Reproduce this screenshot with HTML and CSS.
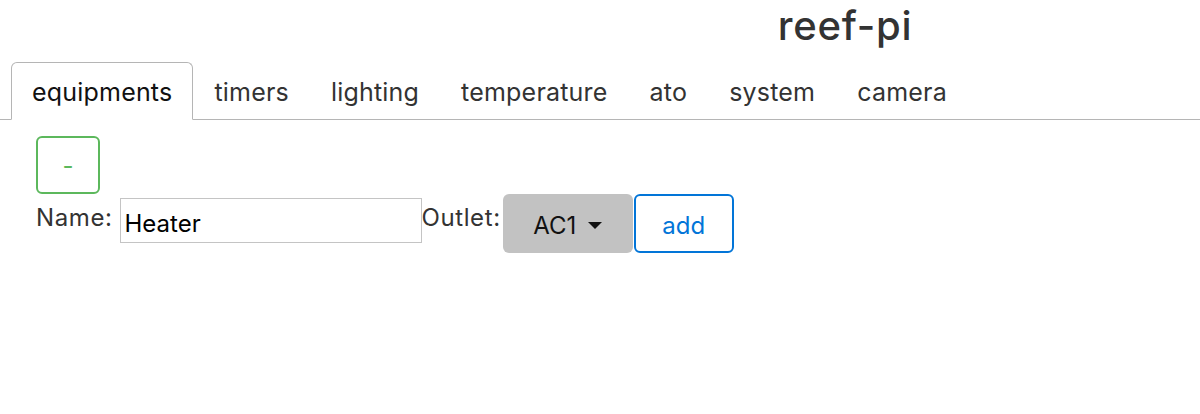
FILE: index.html
```html
<!DOCTYPE html>
<html>
<head>
<meta charset="utf-8">
<link rel="stylesheet" href="styles.css">
</head>
<body>
<header class="header"><h1 class="title">reef-pi</h1></header>
<ul class="tabs">
  <li class="tab active">equipments</li>
  <li class="tab">timers</li>
  <li class="tab">lighting</li>
  <li class="tab">temperature</li>
  <li class="tab">ato</li>
  <li class="tab">system</li>
  <li class="tab">camera</li>
</ul>
<main class="content">
  <button class="btn-minus">-</button>
  <div class="form-row">
    <label class="lbl">Name:</label>
    <input class="name-input" type="text" value="Heater">
    <label class="lbl">Outlet:</label>
    <button class="dropdown">AC1 <span class="caret"></span></button>
    <button class="btn-add">add</button>
  </div>
</main>
</body>
</html>
```
FILE: styles.css
```css
* { box-sizing: border-box; }
body {
  margin: 0;
  font-family: Inter, "Liberation Sans", sans-serif;
  color: #292b2c;
  background: #fff;
}
.header {
  height: 62px;
  padding-left: 490px;
  display: flex;
  justify-content: center;
}
.title {
  margin: 0;
  padding-top: 3px;
  font-size: 40px;
  font-weight: 500;
  letter-spacing: 0.8px;
  line-height: 46px;
  color: #333;
}
.tabs {
  list-style: none;
  margin: 0;
  padding: 0 0 0 11px;
  display: flex;
  border-bottom: 1px solid #b5b5b5;
  height: 58px;
}
.tab {
  padding: 0 20px;
  height: 58px;
  line-height: 58px;
  font-size: 25px;
  letter-spacing: 0.2px;
  color: #333;
  border: 1px solid transparent;
  border-radius: 6px 6px 0 0;
}
.tab.active {
  border-color: #b5b5b5;
  border-bottom-color: #fff;
  background: #fff;
  color: #111;
  margin-bottom: -1px;
}
.content {
  padding: 16px 0 0 36px;
}
.btn-minus {
  width: 64px;
  height: 58px;
  border: 2px solid #5cb85c;
  border-radius: 6px;
  background: #fff;
  color: #5cb85c;
  font-size: 24px;
  font-family: inherit;
  display: block;
}
.form-row {
  display: flex;
  align-items: flex-start;
}
.lbl {
  font-size: 24px;
  letter-spacing: 0.6px;
  color: #333;
  padding-top: 10px;
  line-height: 28px;
}
.lbl:first-child { margin-right: 7px; }
.name-input {
  margin-top: 4px;
  width: 302px;
  height: 45px;
  border: 1px solid #c4c4c4;
  font-size: 24px;
  font-family: inherit;
  padding: 6px 4px 0;
  color: #000;
}
.dropdown {
  margin-left: 2px;
  width: 130px;
  height: 59px;
  background: #c2c2c2;
  border: none;
  border-radius: 6px;
  font-size: 24px;
  font-family: inherit;
  color: #111;
  padding: 4px 0 0;
  display: flex;
  align-items: center;
  justify-content: center;
  gap: 12px;
}
.caret {
  width: 0;
  height: 0;
  border-left: 7px solid transparent;
  border-right: 7px solid transparent;
  border-top: 7px solid #111;
}
.btn-add {
  width: 100px;
  height: 59px;
  margin-left: 1px;
  background: #fff;
  border: 2px solid #0275d8;
  border-radius: 6px;
  color: #0275d8;
  font-size: 24px;
  font-family: inherit;
  padding: 4px 0 0;
}
```
